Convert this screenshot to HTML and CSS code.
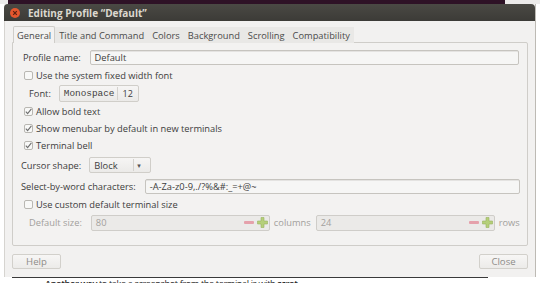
FILE: index.html
```html
<!DOCTYPE html>
<html>
<head>
<meta charset="utf-8">
<link rel="stylesheet" href="styles.css">
</head>
<body>
<div class="screen">
  <div class="topstrip"><div class="purple"></div></div>
  <div class="window">
    <div class="titlebar">
      <span class="closebtn"><svg width="10" height="10" viewBox="0 0 10 10"><circle cx="5" cy="5" r="5" fill="#e4572e"/><path d="M3.2 3.2 L6.8 6.8 M6.8 3.2 L3.2 6.8" stroke="#5a2010" stroke-width="1.2"/></svg></span>
      <span class="title">Editing Profile “Default”</span>
    </div>
    <div class="body">
      <div class="tabs">
        <div class="tab active">General</div>
        <div class="tab">Title and Command</div>
        <div class="tab">Colors</div>
        <div class="tab">Background</div>
        <div class="tab">Scrolling</div>
        <div class="tab">Compatibility</div>
      </div>
      <div class="panel">
        <div class="row r1">
          <span class="lbl lbl-profile">Profile name:</span>
          <div class="entry entry-name">Default</div>
        </div>
        <div class="row r2">
          <span class="check"></span><span>Use the system fixed width font</span>
        </div>
        <div class="row r3">
          <span class="lbl lbl-font">Font:</span>
          <div class="fontbtn"><span class="mono">Monospace</span><span class="sep"></span><span class="fsize">12</span></div>
        </div>
        <div class="row r4">
          <span class="check on"><svg width="9" height="9" viewBox="0 0 9 9"><path d="M1.8 4.6 L3.6 6.6 L7.4 1.8" fill="none" stroke="#6f6f6f" stroke-width="1.1"/></svg></span><span>Allow bold text</span>
        </div>
        <div class="row r5">
          <span class="check on"><svg width="9" height="9" viewBox="0 0 9 9"><path d="M1.8 4.6 L3.6 6.6 L7.4 1.8" fill="none" stroke="#6f6f6f" stroke-width="1.1"/></svg></span><span>Show menubar by default in new terminals</span>
        </div>
        <div class="row r6">
          <span class="check on"><svg width="9" height="9" viewBox="0 0 9 9"><path d="M1.8 4.6 L3.6 6.6 L7.4 1.8" fill="none" stroke="#6f6f6f" stroke-width="1.1"/></svg></span><span>Terminal bell</span>
        </div>
        <div class="row r7">
          <span class="lbl lbl-cursor">Cursor shape:</span>
          <div class="combo"><span class="ctext">Block</span><span class="sep"></span><span class="arrow">▾</span></div>
        </div>
        <div class="row r8">
          <span class="lbl lbl-select">Select-by-word characters:</span>
          <div class="entry entry-chars">-A-Za-z0-9,./?%&amp;#:_=+@~</div>
        </div>
        <div class="row r9">
          <span class="check"></span><span>Use custom default terminal size</span>
        </div>
        <div class="row r10 disabled">
          <span class="lbl lbl-size">Default size:</span>
          <div class="spin spin1"><span class="sval">80</span><span class="minus"></span><span class="plus"><svg width="11" height="11" viewBox="0 0 11 11"><path d="M4 0.5 H7 V4 H10.5 V7 H7 V10.5 H4 V7 H0.5 V4 H4 Z" fill="#b5cf7a" stroke="#98b45e" stroke-width="0.6"/></svg></span></div>
          <span class="unit unit-cols">columns</span>
          <div class="spin spin2"><span class="sval">24</span><span class="minus"></span><span class="plus"><svg width="11" height="11" viewBox="0 0 11 11"><path d="M4 0.5 H7 V4 H10.5 V7 H7 V10.5 H4 V7 H0.5 V4 H4 Z" fill="#b5cf7a" stroke="#98b45e" stroke-width="0.6"/></svg></span></div>
          <span class="unit unit-rows">rows</span>
        </div>
      </div>
      <div class="buttons">
        <div class="btn">Help</div>
        <div class="btn">Close</div>
      </div>
    </div>
  </div>
  <div class="pagetext"><b>Another way</b> to take a screenshot from the terminal is with <b>scrot</b></div>
</div>
</body>
</html>
```
FILE: styles.css
```css
* { box-sizing: border-box; }
html, body { margin: 0; padding: 0; }
body {
  width: 540px;
  height: 283px;
  overflow: hidden;
  background: #ffffff;
  font-family: "Open Sans", "DejaVu Sans", sans-serif;
  font-size: 9.3px;
  color: #3c3c3c;
}
.screen {
  width: 540px;
  height: 283px;
  overflow: hidden;
  background: #ffffff;
  display: flex;
  flex-direction: column;
}
.topstrip {
  height: 4px;
  padding-left: 8px;
  background: #ecebea;
  display: flex;
}
.purple {
  width: 497px;
  height: 4px;
  background: #2e1226;
}
.window {
  margin-left: 4px;
  width: 532px;
  height: 273px;
  display: flex;
  flex-direction: column;
  border-right: 1px solid #bdbab4;
  background: #f2f1f0;
}
.titlebar {
  height: 17px;
  background: linear-gradient(#4a4944, #3c3b37);
  border-radius: 4px 4px 0 0;
  display: flex;
  align-items: center;
  padding-left: 6px;
}
.closebtn { width: 10px; height: 10px; display: flex; }
.title {
  margin-left: 8px;
  font-weight: bold;
  font-size: 10px;
  color: #dcd8cf;
  letter-spacing: 0;
}
.body {
  flex: 1;
  background: #f2f1f0;
  display: flex;
  flex-direction: column;
  padding: 5px 7px 0 7px;
  border-left: 1px solid #d6d4d0;
}
.tabs {
  display: flex;
  height: 17px;
  padding-left: 1px;
  position: relative;
  z-index: 1;
}
.tab {
  padding: 0 4px;
  height: 16px;
  margin-top: 1px;
  display: flex;
  align-items: center;
  background: #e9e8e6;
  color: #4a4a4a;
}
.tab.active {
  height: 17px;
  margin-top: 0;
  background: #f3f2f1;
  border: 1px solid #cfcdc9;
  border-bottom: none;
  border-radius: 2px 2px 0 0;
  padding: 0 3px 0 3px;
}
.panel {
  height: 204px;
  margin-top: -1px;
  border: 1px solid #cfcdc9;
  border-radius: 0 2px 2px 2px;
  background: #f3f2f1;
  padding-top: 6px;
  display: flex;
  flex-direction: column;
}
.row {
  display: flex;
  align-items: center;
  padding-left: 11px;
  white-space: nowrap;
}
.r1 { height: 17px; padding-left: 10px; }
.r2 { height: 18px; }
.r3 { height: 18px; padding-left: 16px; }
.r4 { height: 18px; }
.r5 { height: 17px; }
.r6 { height: 17px; }
.r7 { height: 22px; padding-left: 8px; }
.r8 { height: 20px; padding-left: 8px; }
.r9 { height: 16px; }
.r10 { height: 21px; padding-left: 16px; }
.check {
  width: 9px;
  height: 9px;
  border: 1px solid #b9b7b2;
  border-radius: 2px;
  background: #f8f8f7;
  margin-right: 3px;
  display: flex;
  align-items: center;
  justify-content: center;
}
.check svg { margin: -1px; }
.entry {
  height: 15px;
  border: 1px solid #c6c4bf;
  border-radius: 2px;
  background: #f6f6f5;
  display: flex;
  align-items: center;
  padding-left: 4px;
  box-shadow: inset 0 1px 0 #e4e3e1;
}
.entry-name { margin-left: 9px; width: 429px; }
.entry-chars { margin-left: 9px; width: 375px; }
.fontbtn {
  margin-left: 8px;
  width: 80px;
  height: 17px;
  border: 1px solid #d0cec9;
  border-radius: 2px;
  background: linear-gradient(#f6f5f4, #ebeae8);
  display: flex;
  align-items: center;
  padding-left: 4px;
}
.mono {
  font-family: "Liberation Mono", "DejaVu Sans Mono", monospace;
  font-size: 9.4px;
  color: #404040;
}
.sep {
  width: 1px;
  height: 13px;
  background: #d4d2ce;
  margin: 0 5px 0 2px;
}
.fsize { font-size: 9px; }
.combo {
  margin-left: 8px;
  width: 62px;
  height: 16px;
  border: 1px solid #d0cec9;
  border-radius: 2px;
  background: linear-gradient(#f6f5f4, #ebeae8);
  display: flex;
  align-items: center;
  padding-left: 4px;
}
.ctext { width: 39px; }
.combo .sep { margin: 0 3px 0 0; height: 12px; }
.arrow { font-size: 7px; color: #555; }
.disabled { color: #a2a09c; }
.spin {
  height: 16px;
  border: 1px solid #cfcdc9;
  border-radius: 2px;
  background: #ebeae8;
  display: flex;
  align-items: center;
  padding-left: 4px;
}
.spin1 { margin-left: 9px; width: 179px; }
.spin2 { margin-left: 5px; width: 179px; }
.sval { flex: 1; color: #a3a19d; }
.minus {
  width: 10px;
  height: 3px;
  background: #e5a1ab;
  border-radius: 1px;
  margin-right: 3px;
}
.plus { width: 11px; height: 11px; display: flex; margin-right: 1px; }
.unit-cols { margin-left: 4px; }
.unit-rows { margin-left: 4px; }
.buttons {
  display: flex;
  justify-content: space-between;
  padding: 8px 0 0 0;
}
.btn {
  width: 49px;
  height: 15px;
  border: 1px solid #d2d0cb;
  border-radius: 2px;
  background: linear-gradient(#f7f6f5, #ecebe9);
  display: flex;
  align-items: center;
  justify-content: center;
  color: #8e8c88;
  font-size: 9.6px;
}
.pagetext {
  height: 6px;
  background: #ffffff;
  border-top: 1px solid #3a3a3a;
  margin-left: 12px;
  width: 476px;
  padding-left: 33px;
  font-size: 9.2px;
  letter-spacing: -0.4px;
  line-height: 11px;
  color: #2a2a2a;
  white-space: nowrap;
  overflow: hidden;
}
.pagetext b { font-weight: 600; }
```
